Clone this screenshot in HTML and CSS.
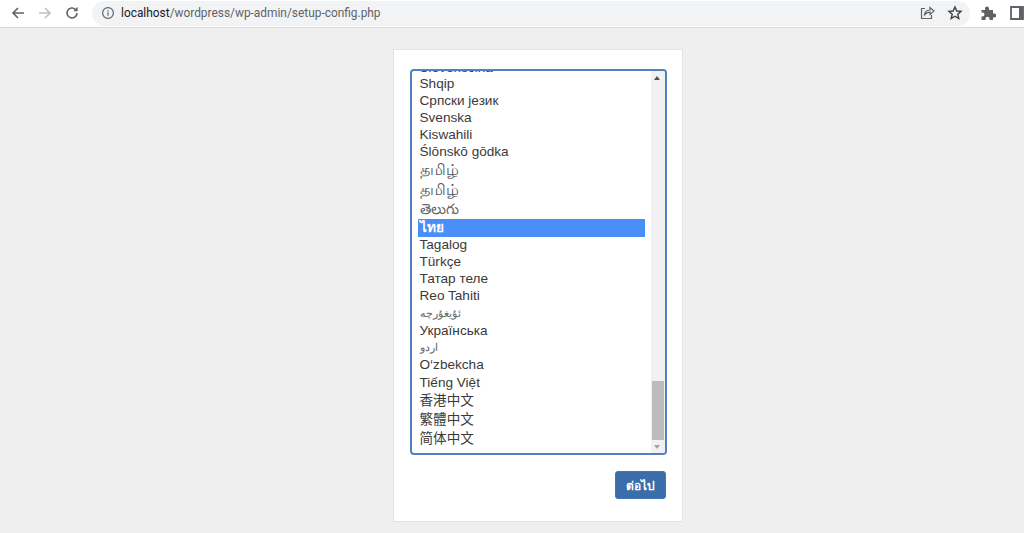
FILE: index.html
```html
<!DOCTYPE html>
<html lang="th">
<head>
<meta charset="utf-8">
<title>WordPress</title>
<link rel="stylesheet" href="styles.css">
</head>
<body>
<header class="toolbar">
  <svg class="tb-icon" width="16" height="16" viewBox="0 0 16 16"><path d="M14 8H3M8 3 3 8l5 5" fill="none" stroke="#5f6368" stroke-width="1.6"/></svg>
  <svg class="tb-icon" width="16" height="16" viewBox="0 0 16 16"><path d="M2 8h11M8 3l5 5-5 5" fill="none" stroke="#bcbfc3" stroke-width="1.6"/></svg>
  <svg class="tb-icon" width="16" height="16" viewBox="0 0 16 16"><path d="M13 8a5 5 0 1 1-1.600-3.700" fill="none" stroke="#5f6368" stroke-width="1.600"/><path d="M13.600 1.800v4.400H9.200z" fill="#5f6368"/></svg>
  <div class="omnibox">
    <svg width="14" height="14" viewBox="0 0 14 14"><circle cx="7" cy="7" r="5.400" fill="none" stroke="#5f6368" stroke-width="1.200"/><path d="M7 6.200v3.600M7 4.200v1.200" stroke="#5f6368" stroke-width="1.200"/></svg>
    <span class="url"><b>localhost</b>/wordpress/wp-admin/setup-config.php</span>
    <svg class="share" width="16" height="16" viewBox="0 0 16 16"><path d="M6 3.500H2.500v10h10V10" fill="none" stroke="#5f6368" stroke-width="1.200"/><path d="M5.500 10c.3-3.200 2.400-5 5.500-5V2.500L15 6l-4 3.500V7.200c-2.300 0-4 .8-5.500 2.800z" fill="none" stroke="#5f6368" stroke-width="1.200"/></svg>
    <svg class="star" width="16" height="16" viewBox="0 0 16 16"><path d="m8 2 1.800 4 4.200.4-3.200 2.800 1 4.300L8 11.200 4.200 13.500l1-4.300L2 6.400 6.200 6z" fill="none" stroke="#3c4043" stroke-width="1.400"/></svg>
  </div>
  <svg class="ext" width="16" height="16" viewBox="0 0 16 16"><path d="M1.500 5H5V3.500a2 2 0 0 1 4 0V5h4v3.500h1.200a2 2 0 0 1 0 4H13V15H9.500v-1.200a2 2 0 0 0-4 0V15h-4v-3.500h1a2 2 0 0 0 0-4h-1z" fill="#5f6368"/></svg>
  <svg class="side" width="14" height="14" viewBox="0 0 14 14"><path d="M1 1h12v12H1z" fill="#fff" stroke="#5f6368" stroke-width="1.800"/><path d="M9 1h4v12H9z" fill="#5f6368"/></svg>
</header>
<main class="page">
  <form class="card">
    <div class="listbox">
      <ul class="options">
        <li class="clipped">Slovenščina</li>
        <li>Shqip</li>
        <li>Српски језик</li>
        <li>Svenska</li>
        <li>Kiswahili</li>
        <li>Ślōnskō gōdka</li>
        <li class="tall tamil">தமிழ்</li>
        <li class="tall tamil">தமிழ்</li>
        <li class="tall telugu">తెలుగు</li>
        <li class="tall selected">ไทย</li>
        <li class="short">Tagalog</li>
        <li class="rest">Türkçe</li>
        <li class="rest">Татар теле</li>
        <li class="rest">Reo Tahiti</li>
        <li class="rest arabic">ئۇيغۇرچە</li>
        <li class="rest">Українська</li>
        <li class="rest arabic">اردو</li>
        <li class="rest">O‘zbekcha</li>
        <li class="rest">Tiếng Việt</li>
        <li class="tall">香港中文</li>
        <li class="tall">繁體中文</li>
        <li class="tall">简体中文</li>
      </ul>
      <div class="scrollbar">
        <span class="arrow up"></span>
        <span class="track"><span class="thumb"></span></span>
        <span class="arrow down"></span>
      </div>
    </div>
    <div class="actions"><button class="next" type="button">ต่อไป</button></div>
  </form>
</main>
</body>
</html>
```
FILE: styles.css
```css
* { box-sizing: border-box; }
html, body { height: 100%; }
body {
  margin: 0;
  height: 533px;
  overflow: hidden;
  display: flex;
  flex-direction: column;
  background: #efefef;
  color: #3a3a3a;
  font-family: "Liberation Sans", "Noto Sans", "Noto Sans CJK SC", sans-serif;
}
.toolbar {
  flex: 0 0 28px;
  display: flex;
  align-items: center;
  padding: 0 10px 1px 10px;
  background: #fff;
  border-bottom: 1px solid #dadce0;
}
.tb-icon { margin-right: 11px; flex: none; }
.omnibox {
  flex: none;
  width: 878px;
  height: 25px;
  margin-left: 1px;
  padding: 0 7px 0 9px;
  display: flex;
  align-items: center;
  background: #f1f3f4;
  border-radius: 13px;
}
.url {
  margin-left: 6px;
  flex: 1;
  font-family: Roboto, "Noto Sans", sans-serif;
  font-size: 11.9px;
  color: #5f6368;
}
.url b { font-weight: 400; color: #202124; }
.share { margin-right: 12px; }
.ext { margin-left: 10px; flex: none; }
.side { margin-left: 14px; flex: none; }
.page {
  flex: 1;
  display: flex;
  justify-content: center;
  padding: 21px 0 0 51px;
}
.card {
  width: 290px;
  height: 473px;
  padding: 19px 15px 0 16px;
  background: #fff;
  border: 1px solid #e4e4e4;
}
.listbox {
  height: 386px;
  display: flex;
  border: 2px solid #4f82bd;
  border-radius: 4px;
  overflow: hidden;
}
.options {
  flex: 1;
  margin: 0;
  padding: 0 6px;
  list-style: none;
  font-size: 13.6px;
  overflow: hidden;
}
.options li {
  height: 17.1px;
  line-height: 17.1px;
  padding-left: 2px;
  white-space: nowrap;
}
.options .clipped { margin-top: -13.1px; line-height: 19px; }
.options .tall { height: 19px; line-height: 19px; }
.options .short { height: 15.5px; line-height: 15.5px; }
.options .rest { height: 17.3px; line-height: 17.3px; }
.options .tamil { height: 19.85px; font-size: 15.5px; color: #555; }
.options .telugu { font-size: 14.5px; color: #666; }
.options .arabic { font-size: 11px; color: #666; }
.options .selected { background: #4a8ff8; color: #fff; font-weight: 700; height: 18px; line-height: 18px; }
.scrollbar {
  flex: 0 0 14px;
  display: flex;
  flex-direction: column;
  background: #f1f1f1;
}
.arrow { flex: 0 0 13px; position: relative; }
.arrow::after {
  content: "";
  position: absolute;
  left: 3.5px;
  top: 5px;
  border-left: 3.5px solid transparent;
  border-right: 3.5px solid transparent;
}
.up::after { border-bottom: 4px solid #505050; }
.down::after { border-top: 4px solid #a3a3a3; }
.track { flex: 1; display: flex; align-items: flex-end; padding: 0 1px 0 1px; }
.thumb { display: block; width: 100%; height: 59px; background: #bcbcbc; }
.actions { display: flex; justify-content: flex-end; margin-top: 16px; padding-right: 1px; }
.next {
  width: 51px;
  height: 28px;
  padding: 0;
  border: 1px solid #4076b4;
  border-radius: 3px;
  background: #3b6da8;
  color: #fff;
  font: 700 12px "Liberation Sans", "Noto Sans", sans-serif;
}
```
